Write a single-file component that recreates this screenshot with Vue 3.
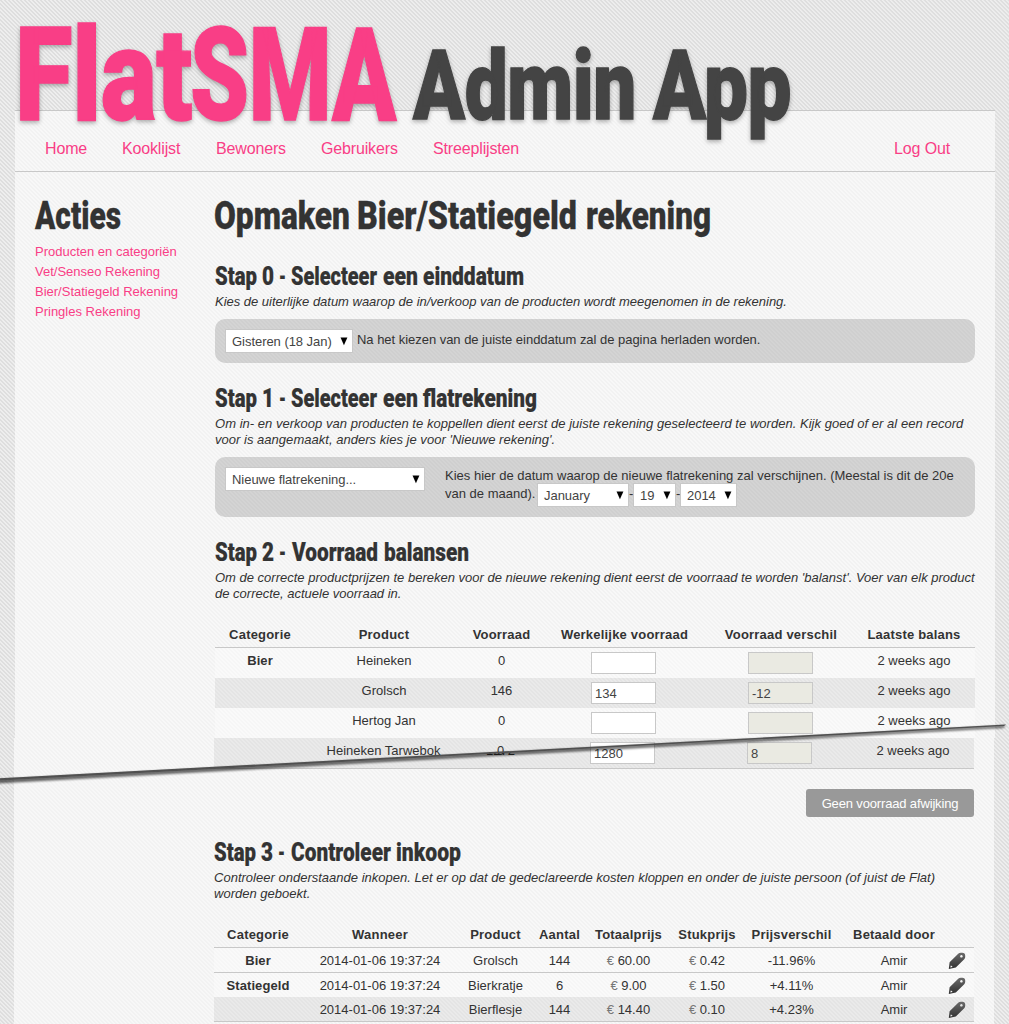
<script setup>
import { h } from 'vue'

// Condensed display lettering: every word is set at its own x and width.
const Words = (props) =>
  h(
    'svg',
    { width: '100%', height: props.height, overflow: 'visible', style: 'display:block;overflow:visible' },
    props.words.map(([t, x, w, size, y, fill]) =>
      h(
        'text',
        {
          x, y: y ?? props.base, textLength: w, lengthAdjust: 'spacingAndGlyphs',
          'font-size': size ?? props.size, fill: fill ?? 'currentColor', stroke: fill ?? 'currentColor',
        },
        t,
      ),
    ),
  )
Words.props = ['words', 'height', 'base', 'size']

const title = [
  ['Flat', 0, 177, 130, 119.5, '#f93e86'],
  ['SMA', 175, 206, 130, 119.5, '#f93e86'],
  ['Admin', 398, 223, 96, 118.7, '#444'],
  ['App', 638, 138, 96, 118.7, '#444'],
]
const nav = [['Home', 77], ['Kooklijst', 94], ['Bewoners', 105], ['Gebruikers', 112], ['Streeplijsten', 100]]
const actions = ['Producten en categoriën', 'Vet/Senseo Rekening', 'Bier/Statiegeld Rekening', 'Pringles Rekening']
const stock = [
  ['Bier', 'Heineken', '0', '', ''],
  ['', 'Grolsch', '146', '134', '-12'],
  ['', 'Hertog Jan', '0', '', ''],
]
const buys = [
  ['Bier', 'Grolsch', '144', '60.00', '0.42', '-11.96%'],
  ['Statiegeld', 'Bierkratje', '6', '9.00', '1.50', '+4.11%'],
  ['', 'Bierflesje', '144', '14.40', '0.10', '+4.23%'],
]
</script>

<template>
  <div class="page">
    <header class="title"><h1><Words :words="title" height="110" /></h1></header>
    <div class="sheet">
      <nav>
        <a v-for="[n, w] in nav" :key="n" :style="{ width: w + 'px' }">{{ n }}</a>
        <a class="out">Log Out</a>
      </nav>
      <div class="cols">
        <aside>
          <h2><Words :words="[['Acties', 0, 86]]" height="70" base="57" size="39" /></h2>
          <a v-for="a in actions" :key="a">{{ a }}</a>
        </aside>
        <main>
          <h2><Words :words="[['Opmaken', -1, 136], ['Bier/Statiegeld', 142, 220], ['rekening', 371, 125]]" height="92" base="57" size="39" /></h2>
          <h3><Words :words="[['Stap', 0, 42], ['0', 47, 12], ['-', 64, 7], ['Selecteer', 76, 86], ['een', 168, 35], ['einddatum', 208, 101]]" height="29" base="21" size="25" /></h3>
          <p class="k0"><span>Kies de uiterlijke datum waarop de in/verkoop van de producten wordt meegenomen in de rekening.</span></p>
          <div class="box b1">
            <span class="sel s1">Gisteren (18 Jan)<i>▼</i></span>
            <span class="note n1">Na het kiezen van de juiste einddatum zal de pagina herladen worden.</span>
          </div>
          <h3><Words :words="[['Stap', 0, 42], ['1', 47, 12], ['-', 64, 7], ['Selecteer', 76, 86], ['een', 168, 35], ['flatrekening', 208, 114]]" height="29" base="21" size="25" /></h3>
          <p class="k1"><span>Om in- en verkoop van producten te koppellen dient eerst de juiste rekening geselecteerd te worden. Kijk goed of er al een record</span><span>voor is aangemaakt, anders kies je voor 'Nieuwe rekening'.</span></p>
          <div class="box b2">
            <span class="sel s2">Nieuwe flatrekening...<i>▼</i></span>
            <div class="note n2">
              <div>Kies hier de datum waarop de nieuwe flatrekening zal verschijnen. (Meestal is dit de 20e</div>
              <div class="date"><em>van de maand).</em><span class="sel mo">January<i>▼</i></span><b>-</b><span class="sel da">19<i>▼</i></span><b>-</b><span class="sel ye">2014<i>▼</i></span></div>
            </div>
          </div>
          <h3><Words :words="[['Stap', 0, 42], ['2', 47, 12], ['-', 64, 7], ['Voorraad', 77, 86], ['balansen', 169, 85]]" height="29" base="21" size="25" /></h3>
          <p class="k2"><span>Om de correcte productprijzen te bereken voor de nieuwe rekening dient eerst de voorraad te worden 'balanst'. Voer van elk product</span><span>de correcte, actuele voorraad in.</span></p>
          <div class="table t1">
            <div class="row head"><div>Categorie</div><div>Product</div><div>Voorraad</div><div>Werkelijke voorraad</div><div>Voorraad verschil</div><div>Laatste balans</div></div>
            <div v-for="(r, i) in stock" :key="i" class="row" :class="{ alt: i % 2 }">
              <div class="cat">{{ r[0] }}</div><div>{{ r[1] }}</div><div>{{ r[2] }}</div>
              <div><span class="inp">{{ r[3] }}</span></div><div><span class="inp off">{{ r[4] }}</span></div><div>2 weeks ago</div>
            </div>
          </div>
        </main>
      </div>
    </div>
    <div class="sheet lower">
      <main>
        <div class="table t1">
          <div class="row alt last">
            <div></div><div class="up">Heineken Tarwebok</div>
            <div class="split"><span class="over">0</span><span class="under">1272</span></div>
            <div><span class="inp">1280</span></div><div><span class="inp off">8</span></div><div>2 weeks ago</div>
          </div>
        </div>
        <div class="act"><button>Geen voorraad afwijking</button></div>
        <h3><Words :words="[['Stap', 0, 42], ['3', 47, 12], ['-', 64, 7], ['Controleer', 77, 100], ['inkoop', 182, 65]]" height="29" base="21" size="25" /></h3>
        <p class="k3"><span>Controleer onderstaande inkopen. Let er op dat de gedeclareerde kosten kloppen en onder de juiste persoon (of juist de Flat)</span><span>worden geboekt.</span></p>
        <div class="table t2">
          <div class="row head"><div>Categorie</div><div>Wanneer</div><div>Product</div><div>Aantal</div><div>Totaalprijs</div><div>Stukprijs</div><div>Prijsverschil</div><div>Betaald door</div><div></div></div>
          <div v-for="(r, i) in buys" :key="i" class="row" :class="{ alt: i === 2, line: i !== 1 }">
            <div class="cat">{{ r[0] }}</div><div>2014-01-06 19:37:24</div><div>{{ r[1] }}</div><div>{{ r[2] }}</div>
            <div><u>€</u> {{ r[3] }}</div><div><u>€</u> {{ r[4] }}</div><div>{{ r[5] }}</div><div>Amir</div>
            <div class="pen">
              <svg width="18" height="18" viewBox="0 0 18 18">
                <defs><linearGradient id="pg" x1="0" y1="0" x2="0" y2="1"><stop offset="0" stop-color="#6b6b6b" /><stop offset="1" stop-color="#303030" /></linearGradient></defs>
                <path fill="url(#pg)" fill-rule="evenodd" d="M.8 17 L1.6 10.2 L10.2 1.8 Q11.2 .8 12.8 .8 L14.4 .8 Q17.2 1 17.2 3.6 L17.2 5 Q17.2 6.3 16 7.4 L7.8 15.6 Z M13.4 3 a1.3 1.3 0 1 0 .01 0Z M2.8 13.4 L2.3 15.6 L4.5 15.1 Q4.2 13.6 2.8 13.4Z" />
              </svg>
            </div>
          </div>
        </div>
      </main>
    </div>
    <svg class="tear" width="1009" height="66" viewBox="0 0 1009 66">
      <defs><filter id="soft" x="-2%" y="-20%" width="104%" height="140%"><feGaussianBlur stdDeviation="1.2" /></filter></defs>
      <path d="M-4 59.6 L1006 5.4 L1003 8 L-4 63.4Z" fill="#000" opacity=".6" filter="url(#soft)" />
      <path d="M0 58.3 L1006 4.5 L1004 6 L0 60.6Z" fill="#505050" />
    </svg>
  </div>
</template>

<style>
body { margin: 0; overflow: hidden; }
</style>

<style scoped>
.page {
  position: relative; width: 1009px; height: 1024px; overflow: hidden;
  font: 13px/16px "Liberation Sans", Arial, sans-serif; color: #333; white-space: nowrap;
  background: repeating-linear-gradient(45deg, #dedede 0 0.9px, #eeeeee 1.5px 2.2px, #dedede 2.828px);
}
h1, h2, h3, p { margin: 0; }
h1, h2, h3 { font-family: Roboto, "Open Sans", sans-serif; font-weight: 900; color: #333; }
h1 { stroke-width: 1.4px; letter-spacing: -.02em; filter: drop-shadow(0 2px 2px rgba(0, 0, 0, .3)); }
h2 { stroke-width: .3px; }
h3 { stroke-width: .2px; }
a { color: #f93e86; }
.title { height: 110px; padding-left: 15px; position: relative; z-index: 2; }
.sheet { margin-left: 15px; width: 980px; box-sizing: border-box; background: rgba(255, 255, 255, .6); }
.sheet:not(.lower) { border-top: 1px solid #c8c8c8; height: 628px; }
nav { height: 61px; box-sizing: border-box; border-bottom: 1px solid #c8c8c8; padding: 0 45px 0 30px; display: flex; line-height: 75px; font-size: 16px; letter-spacing: -.15px; }
nav .out { margin-left: auto; }
.cols { display: flex; }
aside { width: 180px; padding-left: 20px; display: flex; flex-direction: column; line-height: 20px; }
main { width: 760px; }
p { font-style: italic; padding-top: 1px; box-sizing: border-box; }
p span { display: block; height: 16px; }
.k0 { height: 26px; letter-spacing: -.02px; }
.k1 { height: 42px; letter-spacing: .025px; }
.k2 { height: 53px; }
.k3 { height: 53px; letter-spacing: .01px; }
.box { background: rgba(0, 0, 0, .145); border-radius: 10px; display: flex; box-sizing: border-box; padding: 10px; }
.b1 { height: 44px; margin-bottom: 23px; }
.b2 { height: 60px; margin-bottom: 23px; }
.n1 { padding-top: 3px; margin-left: 4px; letter-spacing: -.03px; }
.n2 { margin-left: 20px; line-height: 18px; }
.sel { box-sizing: border-box; height: 24px; background: #fff; border: 1px solid #c8c8c8; padding: 0 4px 0 6px; line-height: 23px; display: flex; justify-content: space-between; color: #444; flex: none; letter-spacing: -.04px; }
.sel i { font: 10px/21px "DejaVu Sans", sans-serif; color: #000; letter-spacing: 0; transform: scaleX(.9); }
.s1 { width: 128px; }
.s2 { width: 200px; }
.date { display: flex; }
.date em { font-style: normal; width: 92px; }
.date .sel { margin-top: -2px; }
.date b { width: 4px; text-align: center; font-weight: 400; }
.mo { width: 92px; }
.da { width: 43px; }
.ye { width: 57px; }
.table .row { display: grid; height: 30px; text-align: center; background: rgba(255, 255, 255, .3); line-height: 25px; box-sizing: border-box; }
.t1 .row { grid-template-columns: 90px 158px 77px 169px 144px 122px; }
.t2 .row { grid-template-columns: 88px 156px 75px 53px 85px 72px 97px 108px 26px; height: 24px; }
.table .row.head { background: none; font-weight: 700; border-bottom: 1px solid #c8c8c8; height: 26px; letter-spacing: .2px; }
.table .row.alt { background: rgba(0, 0, 0, .055); }
.cat { font-weight: 700; letter-spacing: .1px; }
.t2 .row.line { border-bottom: 1px solid #c8c8c8; height: 25px; }
.inp { display: block; width: 65px; height: 22px; box-sizing: border-box; border: 1px solid #c8c8c8; background: #fff; margin: 4px auto 0 51px; text-align: left; padding-left: 3px; line-height: 21px; color: #444; }
.off { background: #eaeae2; margin-left: 39px; }
.lower { margin-left: 14px; height: 286px; padding-left: 200px; }
.t1 .row.last { border-bottom: 1px solid #c8c8c8; height: 31px; }
.up { padding-left: 1px; }
.split { display: grid; }
.split span { grid-area: 1 / 1; }
.over { clip-path: inset(0 0 11px 0); }
.under { clip-path: inset(14px 0 0 0); }
.act { height: 71px; padding-top: 20px; box-sizing: border-box; display: flex; justify-content: flex-end; align-items: flex-start; }
.act button { width: 168px; height: 28px; border: 0; border-radius: 3px; background: #999; color: #fff; font: 13px "Liberation Sans", Arial, sans-serif; letter-spacing: -.15px; padding: 0; }
.t2 u { text-decoration: none; color: #777; }
.pen svg { display: block; margin: 4px 0 0; }
.tear { position: absolute; left: 0; top: 720px; z-index: 3; }
</style>
